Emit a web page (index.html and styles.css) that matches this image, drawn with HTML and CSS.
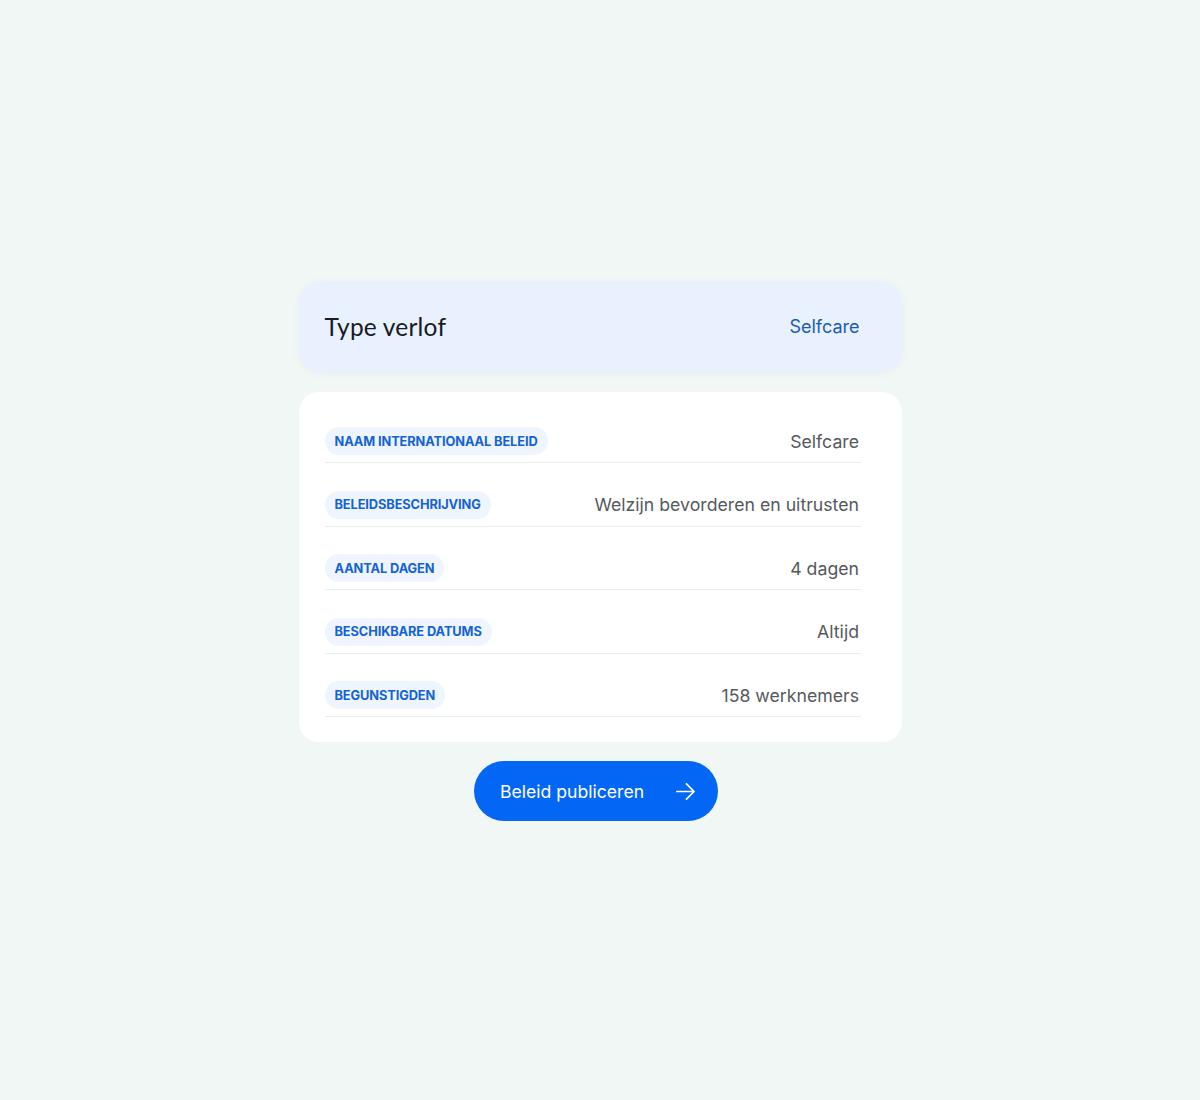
FILE: index.html
```html
<!DOCTYPE html>
<html lang="nl">
<head>
<meta charset="utf-8">
<title>Type verlof</title>
<link rel="stylesheet" href="styles.css">
</head>
<body>
<main class="page">
  <section class="header-card">
    <h1 class="header-title">Type verlof</h1>
    <span class="header-value">Selfcare</span>
  </section>
  <section class="details-card">
    <div class="row"><span class="pill">NAAM INTERNATIONAAL BELEID</span><span class="value">Selfcare</span></div>
    <div class="row"><span class="pill">BELEIDSBESCHRIJVING</span><span class="value">Welzijn bevorderen en uitrusten</span></div>
    <div class="row"><span class="pill">AANTAL DAGEN</span><span class="value">4 dagen</span></div>
    <div class="row"><span class="pill">BESCHIKBARE DATUMS</span><span class="value">Altijd</span></div>
    <div class="row"><span class="pill">BEGUNSTIGDEN</span><span class="value">158 werknemers</span></div>
  </section>
  <button class="publish" type="button">
    <span>Beleid publiceren</span>
    <svg class="arrow" width="21" height="21" viewBox="0 0 22 22" fill="none" stroke="#fff" stroke-width="1.8" stroke-linecap="round" stroke-linejoin="round"><path d="M2 11H20M12 3L20 11L12 19"/></svg>
  </button>
</main>
</body>
</html>
```
FILE: styles.css
```css
* { box-sizing: border-box; }
html, body { margin: 0; padding: 0; }
body {
  background: #f1f7f5;
  font-family: Inter, "Noto Sans", sans-serif;
  width: 1200px;
  height: 1100px;
}
.page {
  display: flex;
  flex-direction: column;
  align-items: center;
  padding-top: 281px;
}
.header-card {
  width: 603px;
  height: 90px;
  background: #e8f1fd;
  border-radius: 22px;
  display: flex;
  align-items: center;
  justify-content: space-between;
  padding: 0 42px 0 26px;
  box-shadow: 0 2px 6px rgba(200, 215, 235, 0.25);
}
.header-title {
  margin: 0;
  font-family: Lato, Inter, sans-serif;
  font-weight: 400;
  font-size: 24.5px;
  color: #161b26;
  letter-spacing: 0.2px;
}
.header-value {
  font-size: 18px;
  color: #1b5cb5;
}
.details-card {
  margin-top: 21px;
  width: 603px;
  background: #ffffff;
  border-radius: 20px;
  padding: 7px 41px 25px 26px;
}
.row {
  display: flex;
  align-items: center;
  justify-content: space-between;
  padding: 27.5px 0 7px;
  border-bottom: 1.5px solid #e8ecec;
}
.row:first-child { padding-top: 28px; }
.pill {
  display: inline-flex;
  align-items: center;
  height: 28px;
  padding: 0 10px;
  border-radius: 14px;
  background: #eef5fd;
  color: #1562d2;
  font-size: 12.8px;
  font-weight: 700;
  letter-spacing: -0.1px;
}
.value {
  font-size: 17.7px;
  color: #55595e;
  margin-right: 1.5px;
}
.publish {
  margin-top: 19px;
  margin-right: 8px;
  width: 244px;
  height: 60px;
  border: none;
  border-radius: 30px;
  background: #0466f5;
  color: #ffffff;
  font-family: Inter, "Noto Sans", sans-serif;
  font-size: 17.6px;
  display: flex;
  align-items: center;
  padding: 0 22px 0 26px;
  justify-content: space-between;
  cursor: pointer;
}
.arrow { display: block; }
```
